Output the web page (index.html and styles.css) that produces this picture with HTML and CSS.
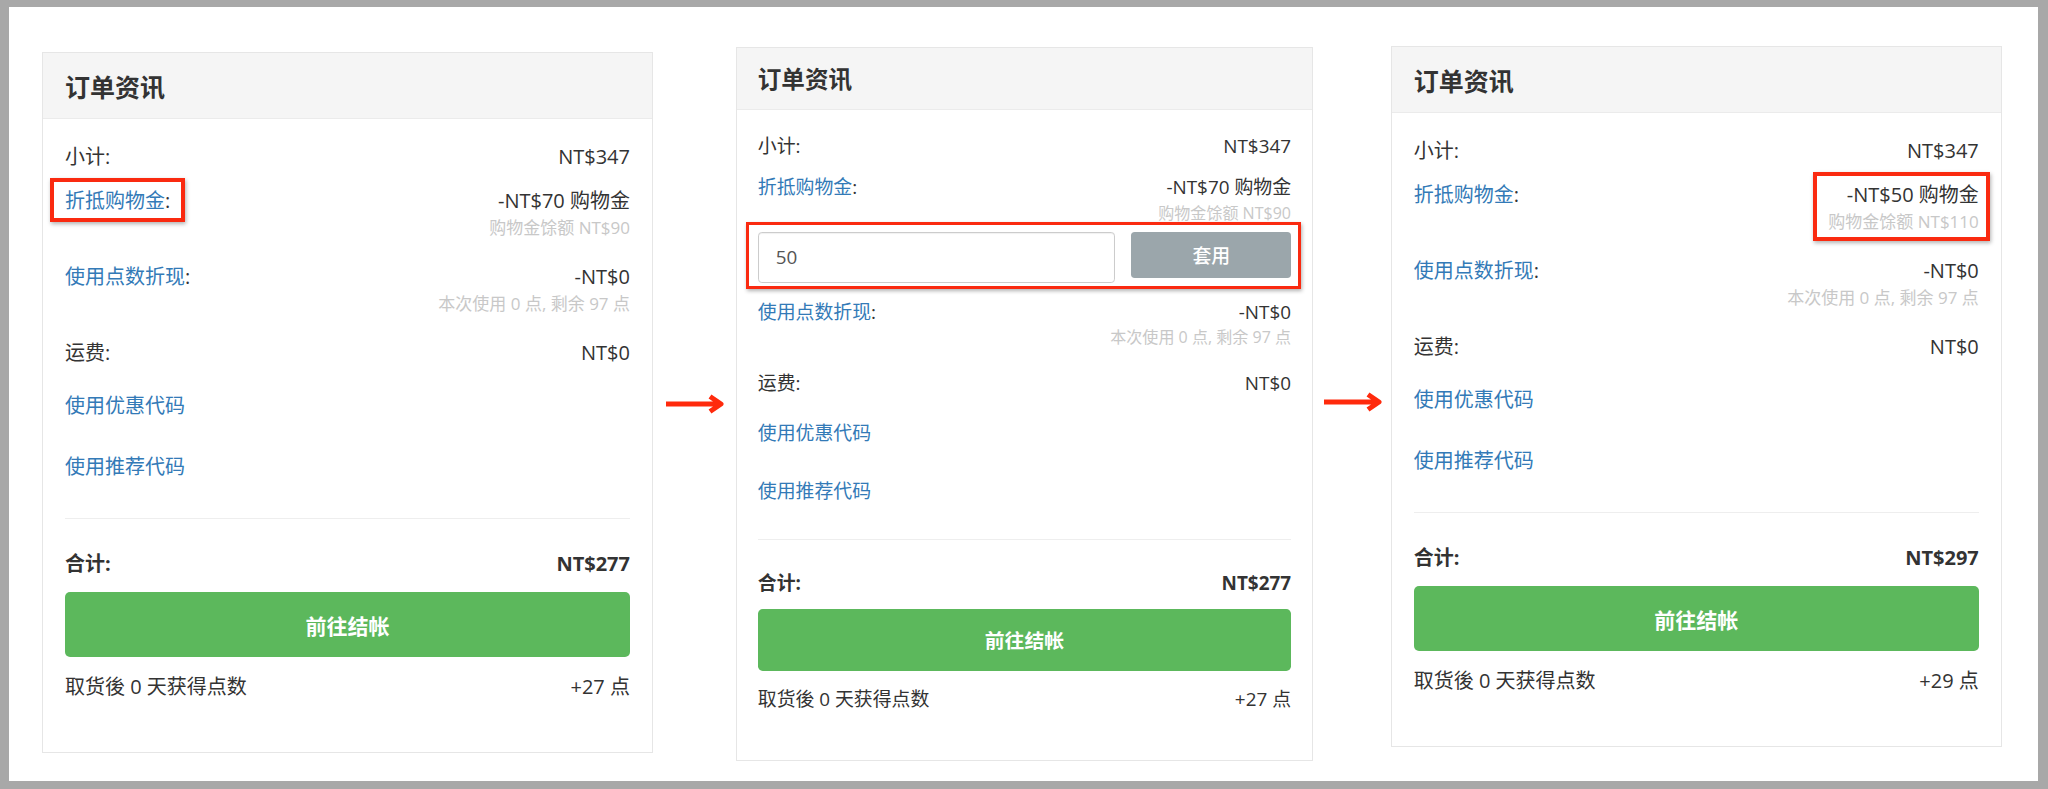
FILE: index.html
```html
<!DOCTYPE html>
<html lang="zh-CN">
<head>
  <meta charset="UTF-8" />
  <meta name="viewport" content="width=device-width, initial-scale=1.0" />
  <title>折抵购物金流程</title>
  <link rel="stylesheet" href="styles.css">
</head>

<body>
  <div class="sheet">

    <!-- 步骤一：原始订单 -->
    <div class="card card-first">
      <div class="card-header">
        <h3>订单资讯</h3>
      </div>
      <div class="card-body">
        <div class="row">
          <span class="label">小计:</span>
          <span class="value">NT$347</span>
        </div>
        <div class="row has-sub">
          <span class="label mark mark-label"><a href="#">折抵购物金</a>:</span>
          <div class="value">
            <div>-NT$70 购物金</div>
            <div class="sub">购物金馀额 NT$90</div>
          </div>
        </div>
        <div class="row has-sub">
          <span class="label"><a href="#">使用点数折现</a>:</span>
          <div class="value">
            <div>-NT$0</div>
            <div class="sub">本次使用 0 点, 剩余 97 点</div>
          </div>
        </div>
        <div class="row">
          <span class="label">运费:</span>
          <span class="value">NT$0</span>
        </div>
        <a class="link-row" href="#">使用优惠代码</a>
        <a class="link-row" href="#">使用推荐代码</a>
        <hr>
        <div class="row total">
          <span class="label">合计:</span>
          <span class="value">NT$277</span>
        </div>
        <button class="btn-checkout">前往结帐</button>
        <div class="row points">
          <span class="label">取货後 0 天获得点数</span>
          <span class="value">+27 点</span>
        </div>
      </div>
    </div>

    <svg class="arrow arrow-first" viewBox="0 0 60 20" width="60" height="20">
      <path d="M1 10H56M45 2.5l11 7.5-11 7.5" fill="none" stroke="#ff2a0c" stroke-width="5" stroke-linejoin="round" />
    </svg>

    <!-- 步骤二：输入折抵金额 -->
    <div class="card card-small">
      <div class="card-header">
        <h3>订单资讯</h3>
      </div>
      <div class="card-body">
        <div class="row">
          <span class="label">小计:</span>
          <span class="value">NT$347</span>
        </div>
        <div class="row has-form">
          <span class="label"><a href="#">折抵购物金</a>:</span>
          <div class="value">
            <div>-NT$70 购物金</div>
            <div class="sub">购物金馀额 NT$90</div>
          </div>
        </div>
        <div class="redeem mark mark-form">
          <input class="redeem-input" type="text" value="50">
          <button class="btn-apply">套用</button>
        </div>
        <div class="row has-sub">
          <span class="label"><a href="#">使用点数折现</a>:</span>
          <div class="value">
            <div>-NT$0</div>
            <div class="sub">本次使用 0 点, 剩余 97 点</div>
          </div>
        </div>
        <div class="row">
          <span class="label">运费:</span>
          <span class="value">NT$0</span>
        </div>
        <a class="link-row" href="#">使用优惠代码</a>
        <a class="link-row" href="#">使用推荐代码</a>
        <hr>
        <div class="row total">
          <span class="label">合计:</span>
          <span class="value">NT$277</span>
        </div>
        <button class="btn-checkout">前往结帐</button>
        <div class="row points">
          <span class="label">取货後 0 天获得点数</span>
          <span class="value">+27 点</span>
        </div>
      </div>
    </div>

    <svg class="arrow arrow-second" viewBox="0 0 60 20" width="60" height="20">
      <path d="M1 10H56M45 2.5l11 7.5-11 7.5" fill="none" stroke="#ff2a0c" stroke-width="5" stroke-linejoin="round" />
    </svg>

    <!-- 步骤三：套用后的结果 -->
    <div class="card card-last">
      <div class="card-header">
        <h3>订单资讯</h3>
      </div>
      <div class="card-body">
        <div class="row">
          <span class="label">小计:</span>
          <span class="value">NT$347</span>
        </div>
        <div class="row has-sub">
          <span class="label"><a href="#">折抵购物金</a>:</span>
          <div class="value mark mark-value">
            <div>-NT$50 购物金</div>
            <div class="sub">购物金馀额 NT$110</div>
          </div>
        </div>
        <div class="row has-sub">
          <span class="label"><a href="#">使用点数折现</a>:</span>
          <div class="value">
            <div>-NT$0</div>
            <div class="sub">本次使用 0 点, 剩余 97 点</div>
          </div>
        </div>
        <div class="row">
          <span class="label">运费:</span>
          <span class="value">NT$0</span>
        </div>
        <a class="link-row" href="#">使用优惠代码</a>
        <a class="link-row" href="#">使用推荐代码</a>
        <hr>
        <div class="row total">
          <span class="label">合计:</span>
          <span class="value">NT$297</span>
        </div>
        <button class="btn-checkout">前往结帐</button>
        <div class="row points">
          <span class="label">取货後 0 天获得点数</span>
          <span class="value">+29 点</span>
        </div>
      </div>
    </div>

  </div>
</body>
</html>
```

FILE: styles.css
```css
* {
  box-sizing: border-box;
}

body {
  margin: 0;
  background: #a8a8a8;
  font-family: "Open Sans", "Noto Sans CJK SC", sans-serif;
  color: #333;
}

.sheet {
  height: 774px;
  margin: 7px 10px 8px 9px;
  background: #fff;
  display: flex;
  align-items: flex-start;
}

/* 订单卡片 */
.card {
  width: 611px;
  background: #fff;
  border: 1px solid #e6e6e6;
}

.card-first {
  margin: 45px 0 0 33px;
}

.card-small {
  zoom: 0.944;
  margin-top: 42px;
}

.card-last {
  margin-top: 39px;
}

.card-header {
  height: 66px;
  padding: 0 22px;
  background: #f5f5f5;
  border-bottom: 1px solid #ebebeb;
  display: flex;
  align-items: center;
}

.card-header h3 {
  margin: 0;
  font-size: 25px;
  font-weight: 700;
  color: #333;
}

.card-body {
  padding: 24px 22px 51px;
  font-size: 20px;
  line-height: 28px;
}

.card-body a {
  color: #337ab7;
  text-decoration: none;
}

.row {
  display: flex;
  justify-content: space-between;
  align-items: flex-start;
  margin-bottom: 16px;
}

.row.has-sub {
  margin-bottom: 22px;
}

.row.has-form {
  margin-bottom: 7px;
}

.value {
  text-align: right;
}

.sub {
  font-size: 17px;
  line-height: 26px;
  color: #c8c8c8;
}

.link-row {
  display: block;
  padding: 9px 0 8px;
  margin-bottom: 16px;
}

.card-body hr {
  margin: 29px 0 31px;
  border: 0;
  border-top: 1px solid #eee;
}

.total {
  font-weight: 700;
  margin-bottom: 14px;
}

.btn-checkout {
  display: block;
  width: 100%;
  height: 65px;
  margin-bottom: 16px;
  border: 0;
  border-radius: 5px;
  background: #5cb85c;
  color: #fff;
  font-family: inherit;
  font-size: 21px;
  font-weight: 700;
}

.points {
  margin-bottom: 0;
}

/* 购物金输入框 */
.redeem {
  display: grid;
  grid-template-columns: 1fr 169px;
  gap: 17px;
  align-items: start;
  margin-bottom: 17px;
}

.redeem-input {
  width: 100%;
  height: 54px;
  padding: 0 18px;
  border: 1px solid #ccc;
  border-radius: 4px;
  box-shadow: inset 0 1px 1px rgba(0, 0, 0, 0.06);
  font-family: inherit;
  font-size: 20px;
  color: #555;
}

.btn-apply {
  height: 49px;
  border: 0;
  border-radius: 4px;
  background: #9ba6ab;
  color: #fff;
  font-family: inherit;
  font-size: 20px;
  font-weight: 500;
}

/* 红框标注 */
.mark {
  position: relative;
}

.mark::after {
  content: "";
  position: absolute;
  border: 4px solid #fa2a10;
  box-shadow: 1px 2px 4px rgba(0, 0, 0, 0.3);
  pointer-events: none;
}

.mark-label::after {
  inset: -9px -15px -7px -15px;
}

.mark-form::after {
  inset: -10px -11px -7px -12px;
}

.mark-value::after {
  inset: -9px -11px -6px -15px;
}

/* 步骤箭头 */
.arrow {
  flex: none;
}

.arrow-first {
  margin: 387px 11px 0 12px;
}

.arrow-second {
  margin: 385px 8px 0 10px;
}
```
